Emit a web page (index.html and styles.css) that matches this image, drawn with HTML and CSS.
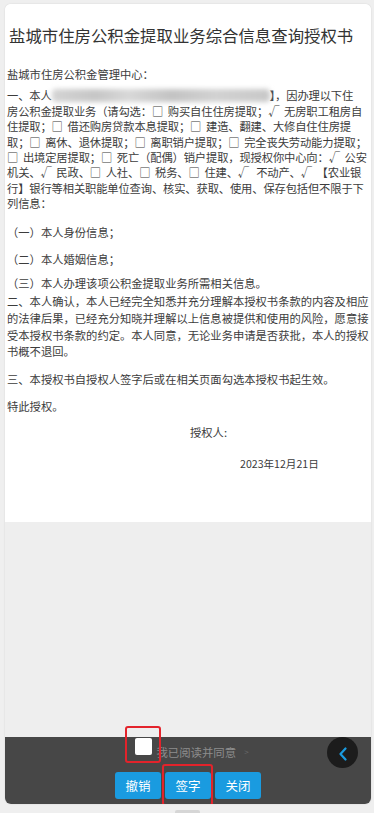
FILE: index.html
```html
<!DOCTYPE html>
<html lang="zh-CN">
<head>
<meta charset="utf-8">
<title>授权书</title>
<link rel="stylesheet" href="styles.css">
</head>
<body>
<div class="screen">
  <div class="card">
    <div class="doc">
      <h1 class="title">盐城市住房公积金提取业务综合信息查询授权书</h1>
      <p class="salute">盐城市住房公积金管理中心：</p>
      <p class="para p1">一、本人<span class="blur"></span>】，因办理以下住<br>房公积金提取业务（请勾选：□&nbsp; 购买自住住房提取；√&nbsp; 无房职工租房自<br>住提取；□&nbsp; 借还购房贷款本息提取；□&nbsp; 建造、翻建、大修自住住房提<br>取；□&nbsp; 离休、退休提取；□&nbsp; 离职销户提取；□&nbsp; 完全丧失劳动能力提取；<br>□&nbsp; 出境定居提取；□&nbsp; 死亡（配偶）销户提取，现授权你中心向：√&nbsp; 公安<br>机关、√&nbsp; 民政、□&nbsp; 人社、□&nbsp; 税务、□&nbsp; 住建、√&nbsp;&nbsp; 不动产、√&nbsp; 【农业银<br>行】银行等相关职能单位查询、核实、获取、使用、保存包括但不限于下<br>列信息：</p>
      <p class="para item i1">（一）本人身份信息；</p>
      <p class="para item i2">（二）本人婚姻信息；</p>
      <p class="para item i3">（三）本人办理该项公积金提取业务所需相关信息。</p>
      <p class="para p2">二、本人确认，本人已经完全知悉并充分理解本授权书条款的内容及相应<br>的法律后果，已经充分知晓并理解以上信息被提供和使用的风险，愿意接<br>受本授权书条款的约定。本人同意，无论业务申请是否获批，本人的授权<br>书概不退回。</p>
      <p class="para p3">三、本授权书自授权人签字后或在相关页面勾选本授权书起生效。</p>
      <p class="para p4">特此授权。</p>
      <p class="para signer">授权人:</p>
      <p class="para date">2023年12月21日</p>
    </div>
    <div class="fill"></div>
    <div class="bar">
      <div class="agree-row">
        <span class="mark mark-check"><span class="checkbox"></span></span>
        <span class="agree-text">我已阅读并同意</span>
        <span class="agree-arrow">&gt;</span>
      </div>
      <div class="btn-row">
        <button class="btn">撤销</button>
        <span class="mark mark-sign"><button class="btn">签字</button></span>
        <button class="btn">关闭</button>
      </div>
      <button class="back" aria-label="返回">
        <svg width="10" height="14" viewBox="0 0 10 14"><path d="M7.5 1.5 L2.5 7 L7.5 12.5" fill="none" stroke="#1a9be0" stroke-width="2.2" stroke-linecap="round" stroke-linejoin="round"/></svg>
      </button>
    </div>
  </div>
  <div class="indicator"></div>
</div>
</body>
</html>
```

FILE: styles.css
```css
* { box-sizing: border-box; }
html, body { margin: 0; padding: 0; }
body {
  background: #efefef;
  font-family: "Noto Sans CJK SC", "Noto Sans", sans-serif;
  width: 374px;
  height: 813px;
  overflow: hidden;
}
.screen {
  display: flex;
  flex-direction: column;
  align-items: center;
  padding-top: 4px;
}
.card {
  width: 366px;
  height: 800px;
  margin-left: 2px;
  display: flex;
  flex-direction: column;
  border-radius: 6px;
  overflow: hidden;
  box-shadow: 0 0 2px rgba(0,0,0,0.12);
  background: #fff;
}
.doc {
  height: 518px;
  background: #fff;
  padding: 20px 0 0 2px;
  color: #3c3c3c;
  flex: none;
}
.title {
  margin: 0;
  padding-left: 2px;
  font-size: 16.4px;
  line-height: 22px;
  font-weight: normal;
  color: #333;
  white-space: nowrap;
}
.salute, .para {
  margin: 0;
  font-size: 11.3px;
  line-height: 15.4px;
  white-space: nowrap;
}
.salute { margin-top: 21px; }
.p1 { margin-top: 6px; letter-spacing: -0.15px; }
.i1 { margin-top: 13.5px; }
.i2 { margin-top: 11px; }
.i3 { margin-top: 9px; }
.p2 { margin-top: 2px; line-height: 16.6px; }
.p3 { margin-top: 12.5px; }
.p4 { margin-top: 11.6px; }
.signer { margin-top: 10px; padding-left: 183px; }
.date { margin-top: 16px; padding-left: 233px; font-size: 10.6px; }
.blur {
  display: inline-block;
  width: 218px;
  height: 13px;
  vertical-align: -2px;
  background: linear-gradient(90deg, #d4d4d4 0%, #c6c6c6 20%, #d8d8d8 35%, #c3c3c3 55%, #d2d2d2 75%, #c8c8c8 100%);
  filter: blur(2.5px);
  border-radius: 4px;
}
.fill {
  flex: 1;
  background: #eeeeee;
}
.bar {
  position: relative;
  height: 67px;
  flex: none;
  background: #474747;
  padding-top: 1px;
  display: flex;
  flex-direction: column;
  align-items: center;
}
.agree-row {
  display: flex;
  align-items: flex-start;
  margin-left: 8px;
}
.mark { position: relative; display: inline-block; }
.mark::after {
  content: "";
  position: absolute;
  border: 2px solid #e3232b;
  border-radius: 3px;
  pointer-events: none;
}
.mark-check::after { left: -10px; right: -9px; top: -12px; bottom: -8px; }
.mark-sign::after { left: -3px; right: -2px; top: -8px; bottom: -7px; }
.checkbox {
  display: block;
  width: 17px;
  height: 17px;
  background: #fff;
  border-radius: 2px;
}
.agree-text {
  margin-top: 7px;
  margin-left: 4px;
  font-size: 11.4px;
  line-height: 14px;
  color: #8d8d8d;
}
.agree-arrow {
  margin-top: 8px;
  margin-left: 8px;
  font-size: 8px;
  line-height: 12px;
  color: #6a6a6a;
}
.btn-row {
  display: flex;
  gap: 4px;
  margin-top: 13px;
}
.btn {
  width: 46px;
  height: 27px;
  border: none;
  border-radius: 3px;
  background: #1a9be0;
  color: #fff;
  font-family: "Noto Sans CJK SC", sans-serif;
  font-size: 12.5px;
  line-height: 27px;
  padding: 0;
  display: block;
}
.back {
  position: absolute;
  left: 322px;
  top: 0;
  width: 31px;
  height: 31px;
  border: none;
  border-radius: 50%;
  background: #1c1c1c;
  padding: 0;
  display: flex;
  align-items: center;
  justify-content: center;
}
.back svg { display: block; margin-top: 2px; }
.indicator {
  width: 25px;
  height: 4px;
  margin-top: 6px;
  background: #d6d6d6;
  border-radius: 2px 2px 0 0;
}
```
